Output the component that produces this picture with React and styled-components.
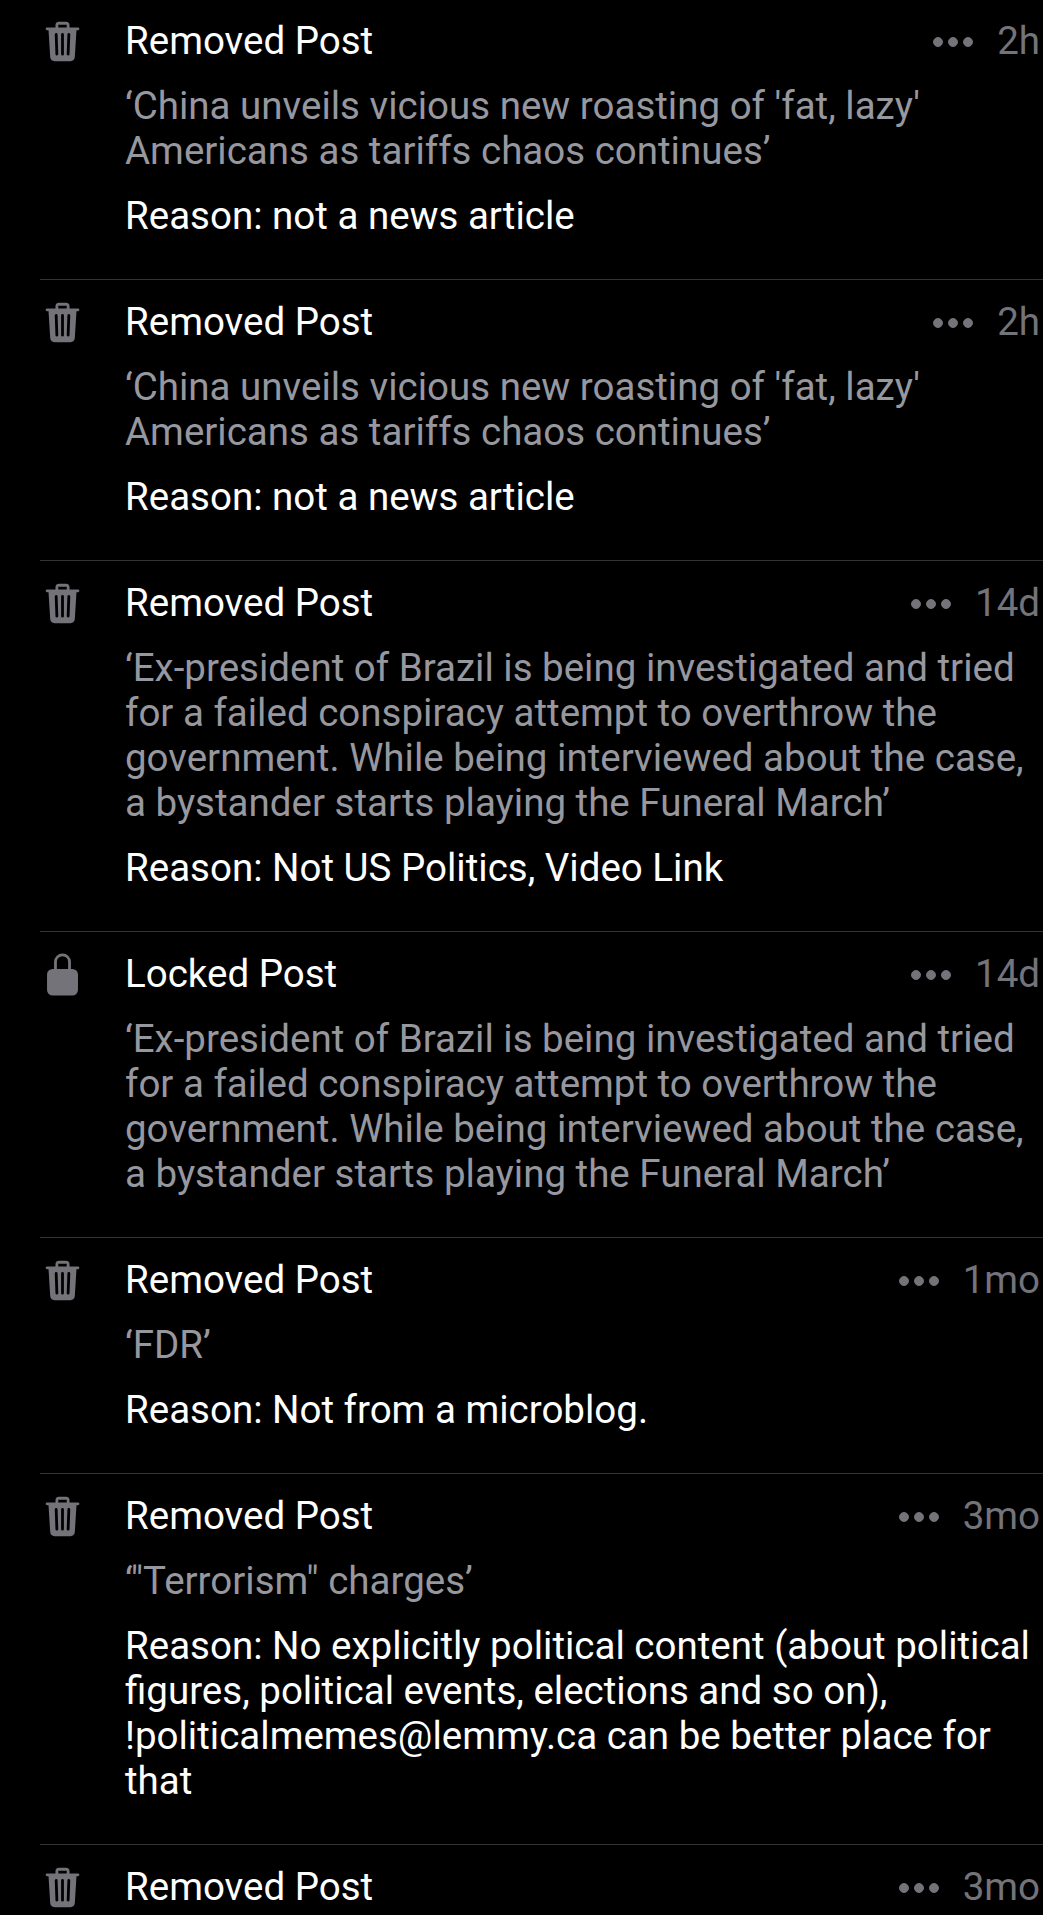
import React from "react";
import styled, { createGlobalStyle } from "styled-components";
import { IoTrash, IoLockClosed, IoEllipsisHorizontal } from "react-icons/io5";

const GlobalStyle = createGlobalStyle`
  body {
    margin: 0;
    background: #000;
    overflow: hidden;
  }
`;

const Log = styled.main`
  box-sizing: border-box;
  height: 1915px;
  overflow: hidden;
  background: #000;
  font-family: Roboto, sans-serif;
  font-size: 38.5px;
  line-height: 45px;
`;

const List = styled.ul`
  list-style: none;
  margin: -1px 0 0 40px;
  padding: 0;
`;

const Entry = styled.li`
  display: flex;
  gap: 40px;
  padding: 19px 3px 41px 0;
  border-bottom: 1px solid #333335;
`;

const EntryIcon = styled.div`
  display: flex;
  align-items: center;
  justify-content: center;
  flex: none;
  width: 45px;
  height: 45px;
  margin-top: 1px;
  color: #737379;
  font-size: 45px;
`;

const Content = styled.div`
  display: flex;
  flex-direction: column;
  gap: 20px;
  flex: 1;
  min-width: 0;
`;

const Header = styled.header`
  display: flex;
  align-items: center;
  justify-content: space-between;
  height: 45px;
`;

const Title = styled.h2`
  margin: 0;
  font: inherit;
  color: #fff;
`;

const Meta = styled.div`
  display: flex;
  align-items: center;
  gap: 20px;
  color: #737379;
`;

const MoreIcon = styled(IoEllipsisHorizontal)`
  width: 48px;
  height: 48px;
  margin: 0 0 -2px;
  stroke: currentColor;
  stroke-width: 10px;
`;

const Quote = styled.p`
  margin: 0;
  color: #96979f;
`;

const Reason = styled.p`
  margin: 0;
  color: #fff;
`;

const china =
  "China unveils vicious new roasting of 'fat, lazy' Americans as tariffs chaos continues";
const brazil =
  "Ex-president of Brazil is being investigated and tried for a failed conspiracy attempt to overthrow the government. While being interviewed about the case, a bystander starts playing the Funeral March";

const entries = [
  { title: "Removed Post", age: "2h", post: china, reason: "not a news article" },
  { title: "Removed Post", age: "2h", post: china, reason: "not a news article" },
  { title: "Removed Post", age: "14d", post: brazil, reason: "Not US Politics, Video Link" },
  { title: "Locked Post", age: "14d", post: brazil, locked: true },
  { title: "Removed Post", age: "1mo", post: "FDR", reason: "Not from a microblog." },
  {
    title: "Removed Post",
    age: "3mo",
    post: '"Terrorism" charges',
    reason:
      "No explicitly political content (about political figures, political events, elections and so on), !politicalmemes@lemmy.ca can be better place for that",
  },
  { title: "Removed Post", age: "3mo" },
];

function LogEntry({ title, age, post, reason, locked }) {
  return (
    <Entry>
      <EntryIcon>{locked ? <IoLockClosed /> : <IoTrash />}</EntryIcon>
      <Content>
        <Header>
          <Title>{title}</Title>
          <Meta>
            <MoreIcon />
            <span>{age}</span>
          </Meta>
        </Header>
        {post && <Quote>{`‘${post}’`}</Quote>}
        {reason && <Reason>{`Reason: ${reason}`}</Reason>}
      </Content>
    </Entry>
  );
}

export default function App() {
  return (
    <Log>
      <GlobalStyle />
      <List>
        {entries.map((entry, i) => (
          <LogEntry key={i} {...entry} />
        ))}
      </List>
    </Log>
  );
}
